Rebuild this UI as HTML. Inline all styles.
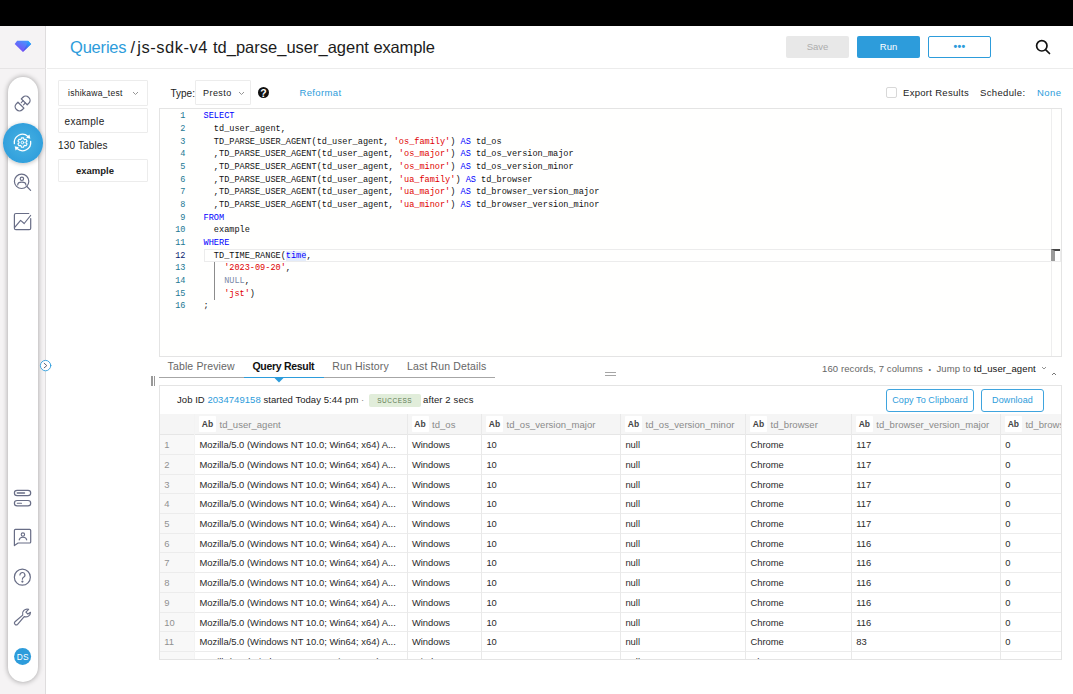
<!DOCTYPE html>
<html lang="en">
<head>
<meta charset="utf-8">
<title>Queries / js-sdk-v4 td_parse_user_agent example</title>
<style>
*{box-sizing:border-box;margin:0;padding:0}
html,body{width:1073px;height:694px;overflow:hidden;background:#fff;font-family:"Liberation Sans",sans-serif;color:#222;}
body{position:relative}
.abs{position:absolute}
#topbar{position:absolute;left:0;top:0;width:1073px;height:26px;background:#000}
#side{position:absolute;left:0;top:26px;width:46px;height:668px;background:#f5f3f4;border-right:1px solid #dfddde}
#sidelogo{position:absolute;left:0;top:26px;width:46px;height:43px;border-bottom:1px solid #e6e4e5}
#pill{position:absolute;left:7.7px;top:77px;width:29.9px;height:604.7px;border-radius:15px;background:#fff;box-shadow:0 0 5px 0.5px rgba(0,0,0,.3)}
#active{position:absolute;left:2.9px;top:122.9px;width:39.7px;height:39.7px;border-radius:50%;background:radial-gradient(circle at 50% 50%,#48b2e2 0%,#2d9cdb 85%);box-shadow:0 1px 4px rgba(0,0,0,.25)}
#header{position:absolute;left:47px;top:26px;width:1026px;height:43px;border-bottom:1px solid #ececec;background:#fff}
.title{position:absolute;top:37px;font-size:16.5px;line-height:20px;white-space:nowrap;color:#1c1c1c}
.btn{position:absolute;top:36px;height:22px;width:63px;border-radius:2px;font-size:9.5px;line-height:22px;text-align:center}
.box{position:absolute;background:#fff;border:1px solid #ececec;border-radius:1px}
.t{font-size:9.5px;line-height:12px;white-space:nowrap;position:absolute;color:#222}
.blue{color:#2d9cdb}
#editor{position:absolute;left:159px;top:108px;width:903px;height:249px;background:#fffffe;border:1px solid #e4e4e4;overflow:hidden}
.row{position:absolute;left:0;width:901px;height:12.67px;font-family:"Liberation Mono",monospace;font-size:8.57px;line-height:12.67px}
.ln{position:absolute;left:0;width:25.5px;text-align:right;color:#237893}
.ln.cur{color:#0b216f}
.code{position:absolute;left:43.6px;white-space:pre;color:#111}
.k{color:#0000ff}.s{color:#e00000}.n{color:#7b8aa8}
.hl{background:#e4ecfb}
#results{position:absolute;left:159px;top:385px;width:903px;height:275px;border:1px solid #e4e4e4;background:#fff;overflow:hidden}
.thbg{position:absolute;left:0;width:901px;background:#f5f5f5;border-bottom:1px solid #e6e6e6}
.rnbg{position:absolute;left:0;height:300px;background:#f8f8f8}
.ab{position:absolute;background:#fff;color:#444;font-weight:bold;font-size:8.5px;width:17px;height:16px;line-height:17.4px;text-align:center;border-radius:1px}
.cn{position:absolute;font-size:9.5px;line-height:21.6px;color:#8a8a8a;white-space:nowrap;letter-spacing:0.04px}
.tr{position:absolute;left:0;width:901px;height:19.72px;border-bottom:1px solid #ececec;font-size:9.42px;line-height:20.8px;color:#2a2a2a;white-space:nowrap}
.tr span{position:absolute;top:0}
.rn{left:4.2px;color:#919191}
.vl{position:absolute;width:1px;height:300px;background:#e9e9e9}
.tab{position:absolute;top:358.6px;font-size:10.5px;line-height:14px;color:#666;white-space:nowrap;letter-spacing:0.15px}
</style>
</head>
<body>
<div id="topbar"></div>
<div id="side"></div>
<div id="sidelogo"></div>
<div id="pill"></div>
<div id="active"></div>
<div id="header"></div>

<!-- sidebar icons -->
<svg class="abs" style="left:0;top:26px" width="60" height="668" viewBox="0 26 60 668" fill="none" stroke="#686d86" stroke-width="1.2" stroke-linecap="round" stroke-linejoin="round">
 <defs>
  <linearGradient id="gem" x1="1" y1="0" x2="0.2" y2="1"><stop offset="0" stop-color="#3aa5ff"/><stop offset="1" stop-color="#8144f6"/></linearGradient>
  <linearGradient id="gem2" x1="0.8" y1="0" x2="0.2" y2="1"><stop offset="0" stop-color="#1fb0ff"/><stop offset="1" stop-color="#5a3fe6"/></linearGradient>
 </defs>
 <path d="M17.1 40.7 H28 L31.2 44.1 L22.9 52 L14.7 44.1 Z" fill="url(#gem)" stroke="none"/>
 <path d="M28 40.7 L31.2 44.1 L22.9 52 L27.2 43.4 Z" fill="url(#gem2)" stroke="none"/>
 <!-- link -->
 <g transform="translate(22.6 103.5) rotate(-45)" stroke-width="1.3">
  <path d="M2.35 -4.2 H4.7 A3.9 3.9 0 0 1 8.6 -0.3 V0.3 A3.9 3.9 0 0 1 4.7 4.2 H2.35 Z"/>
  <path d="M-2.35 -4.2 H-4.7 A3.9 3.9 0 0 0 -8.6 -0.3 V0.3 A3.9 3.9 0 0 0 -4.7 4.2 H-2.35 Z"/>
  <path d="M-0.3 -1.6 H2.35 M-0.3 1.6 H2.35" stroke-width="1.1"/>
 </g>
 <!-- active gear -->
 <g stroke="#fff" stroke-width="1.3">
<path d="M21.00 139.34 L21.51 137.80 L23.49 137.80 L24.00 139.34 L24.49 139.62 L26.07 139.29 L27.06 141.01 L25.99 142.21 L25.99 142.79 L27.06 143.99 L26.07 145.71 L24.49 145.38 L24.00 145.66 L23.49 147.20 L21.51 147.20 L21.00 145.66 L20.51 145.38 L18.93 145.71 L17.94 143.99 L19.01 142.79 L19.01 142.21 L17.94 141.01 L18.93 139.29 L20.51 139.62 Z" stroke-width="1.15"/>
<circle cx="22.5" cy="142.5" r="1.3" stroke-width="0.9"/>
<path d="M14.38 143.64 A8.2 8.2 0 0 1 27.99 136.41"/>
<path d="M30.62 141.36 A8.2 8.2 0 0 1 17.01 148.59"/>
<path d="M30.33 138.80 L29.41 134.54 L26.11 137.73 Z" fill="#fff" stroke="none"/>
<path d="M14.67 146.20 L15.59 150.46 L18.89 147.27 Z" fill="#fff" stroke="none"/>

 </g>
 <!-- person search -->
 <g>
  <circle cx="21.6" cy="181.3" r="7.2"/>
  <circle cx="21.9" cy="178.8" r="1.7"/>
  <path d="M17.7 184.9 a4.1 2.8 0 0 1 8.2 0"/>
  <path d="M26.9 186.500 L30.600 190.300"/>
 </g>
 <!-- chart -->
 <g>
  <path d="M28.8 213.500 H15.900 a1.500 1.500 0 0 0 -1.500 1.500 V228.200 a1.500 1.500 0 0 0 1.500 1.500 H29.200 a1.500 1.500 0 0 0 1.500 -1.500 V218.500"/>
  <path d="M14.700 227.300 L20.600 220.400 L24.200 223.500 L30.600 215.500"/>
 </g>
 <!-- collapse circle -->
 <circle cx="45.6" cy="365.6" r="5.2" fill="#fff" stroke="#2d9cdb" stroke-width="0.9"/>
 <path d="M44.200 363.300 L46.800 365.600 L44.200 367.800" stroke="#4a5068" stroke-width="0.9"/>
 <!-- pills -->
 <rect x="14.400" y="490.300" width="16.300" height="5.400" rx="2.700"/>
 <rect x="14.400" y="500.500" width="16.300" height="5.400" rx="2.700"/>
 <path d="M17.300 493 H24.500" stroke-width="1.400"/><path d="M17.300 503.200 H21.500" stroke-width="1.100"/>
 <!-- contact -->
 <path d="M15.400 529.400 H29.700 a1 1 0 0 1 1 1 V542 a1 1 0 0 1 -1 1 H18.100 L14.400 545.600 V530.400 a1 1 0 0 1 1 -1 Z"/>
 <circle cx="22.900" cy="534.600" r="1.700" stroke-width="1.100"/>
 <path d="M19.200 539.900 a3.800 3.200 0 0 1 7.500 0" stroke-width="1.100"/>
 <!-- help -->
 <circle cx="22.350" cy="577.200" r="8"/>
 <path d="M19.900 575 a2.500 2.500 0 1 1 3.700 2.200 c-.9 .5 -1.200 1 -1.200 2"/>
 <circle cx="22.400" cy="581.600" r=".5" fill="#5a5f78"/>
 <!-- wrench -->
 <path d="M30.500 612.300 a4.600 4.600 0 0 1 -6.300 4.300 L17.600 624.300 a1.800 1.800 0 0 1 -2.600 -2.600 L22.700 615.100 a4.600 4.600 0 0 1 5.900 -5.700 L25.900 612.100 L27.900 614.100 Z"/>
 <!-- avatar -->
 <circle cx="22.600" cy="656.400" r="8.500" fill="#2d9cdb" stroke="none"/>
</svg>
<div class="abs" style="left:14.2px;top:650.8px;width:17px;text-align:center;font-size:8.4px;line-height:12px;color:#fff;letter-spacing:0">DS</div>

<div class="abs" style="left:0;top:0;width:0;height:0"><span class="title blue" style="left:70px;letter-spacing:-0.2px">Queries</span> <span class="title" style="left:130.500px">/</span> <span class="title" style="left:137.200px;letter-spacing:0.54px">js-sdk-v4</span> <span class="title" style="left:213px">td_parse_user_agent</span> <span class="title" style="left:373.400px;letter-spacing:-0.15px">example</span></div>
<div class="btn" style="left:786px;background:#e8e8e8;color:#adadad">Save</div>
<div class="btn" style="left:857px;background:#2d9cdb;color:#fff">Run</div>
<div class="btn" style="left:928px;background:#fff;border:1px solid #2d9cdb;color:#2d9cdb;line-height:18px;font-size:10.5px;font-weight:bold;letter-spacing:0.3px">•••</div>
<svg class="abs" style="left:1034px;top:38px" width="18" height="18" viewBox="0 0 18 18" fill="none" stroke="#111" stroke-width="1.7" stroke-linecap="round"><circle cx="7.800" cy="7.800" r="5.200"/><path d="M11.800 11.800 L15.500 15.500"/></svg>

<!-- left panel -->
<div class="box" style="left:58px;top:80px;width:90px;height:26px"></div>
<div class="t" style="left:68px;top:87px;font-size:8.5px;letter-spacing:0.27px">ishikawa_test</div>
<svg class="abs" style="left:132.3px;top:91px" width="7" height="5" viewBox="0 0 7 5" fill="none" stroke="#8a8a8a" stroke-width="0.9"><path d="M1 1 L3.500 3.500 L6 1"/></svg>
<div class="box" style="left:58px;top:108px;width:90px;height:25px"></div>
<div class="t" style="left:64.6px;top:115.8px;font-size:10px;letter-spacing:0.3px">example</div>
<div class="t" style="left:58px;top:139.8px;font-size:10px;letter-spacing:0.15px">130 Tables</div>
<div class="box" style="left:58px;top:159px;width:90px;height:23px"></div>
<div class="t" style="left:58px;top:165px;width:74px;text-align:center;font-size:9.5px;font-weight:bold">example</div>

<!-- toolbar -->
<div class="t" style="left:170.500px;top:87.5px;font-size:10px">Type:</div>
<div class="box" style="left:195px;top:80px;width:56px;height:25px"></div>
<div class="t" style="left:203px;top:87px;font-size:9px;letter-spacing:0.45px">Presto</div>
<svg class="abs" style="left:238px;top:91px" width="7" height="5" viewBox="0 0 7 5" fill="none" stroke="#8a8a8a" stroke-width="0.9"><path d="M1 1 L3.500 3.500 L6 1"/></svg>
<div class="abs" style="left:257.7px;top:86.7px;width:11.6px;height:11.6px;border-radius:50%;background:#111;color:#fff;font-size:10.5px;line-height:12px;font-weight:bold;text-align:center">?</div>
<div class="t blue" style="left:299.500px;top:87px;font-size:9.5px;letter-spacing:0.35px">Reformat</div>
<div class="abs" style="left:886px;top:87px;width:11px;height:11px;border:1px solid #d8d8d8;border-radius:2px;background:#fff"></div>
<div class="t" style="left:903px;top:87px;font-size:9.5px;letter-spacing:0.3px">Export Results</div>
<div class="t" style="left:980px;top:87px;font-size:9.5px;letter-spacing:0.35px">Schedule:</div>
<div class="t blue" style="left:1037px;top:87px;font-size:9.5px;letter-spacing:0.4px">None</div>

<!-- editor -->
<div id="editor">
<div class="abs" style="left:44px;top:140px;width:857px;height:13px;border:1px solid #ececec"></div>
<div class="abs" style="left:53.600px;top:152.500px;width:1px;height:38.500px;background:#8c8c8c"></div>
<div class="row" style="top:1.20px"><span class="ln">1</span><span class="code"><span class="k">SELECT</span></span></div>
<div class="row" style="top:13.87px"><span class="ln">2</span><span class="code">  td_user_agent,</span></div>
<div class="row" style="top:26.54px"><span class="ln">3</span><span class="code">  TD_PARSE_USER_AGENT(td_user_agent, <span class="s">&#x27;os_family&#x27;</span>) <span class="k">AS</span> td_os</span></div>
<div class="row" style="top:39.21px"><span class="ln">4</span><span class="code">  ,TD_PARSE_USER_AGENT(td_user_agent, <span class="s">&#x27;os_major&#x27;</span>) <span class="k">AS</span> td_os_version_major</span></div>
<div class="row" style="top:51.88px"><span class="ln">5</span><span class="code">  ,TD_PARSE_USER_AGENT(td_user_agent, <span class="s">&#x27;os_minor&#x27;</span>) <span class="k">AS</span> td_os_version_minor</span></div>
<div class="row" style="top:64.55px"><span class="ln">6</span><span class="code">  ,TD_PARSE_USER_AGENT(td_user_agent, <span class="s">&#x27;ua_family&#x27;</span>) <span class="k">AS</span> td_browser</span></div>
<div class="row" style="top:77.22px"><span class="ln">7</span><span class="code">  ,TD_PARSE_USER_AGENT(td_user_agent, <span class="s">&#x27;ua_major&#x27;</span>) <span class="k">AS</span> td_browser_version_major</span></div>
<div class="row" style="top:89.89px"><span class="ln">8</span><span class="code">  ,TD_PARSE_USER_AGENT(td_user_agent, <span class="s">&#x27;ua_minor&#x27;</span>) <span class="k">AS</span> td_browser_version_minor</span></div>
<div class="row" style="top:102.56px"><span class="ln">9</span><span class="code"><span class="k">FROM</span></span></div>
<div class="row" style="top:115.23px"><span class="ln">10</span><span class="code">  example</span></div>
<div class="row" style="top:127.90px"><span class="ln">11</span><span class="code"><span class="k">WHERE</span></span></div>
<div class="row" style="top:140.57px"><span class="ln cur">12</span><span class="code">  TD_TIME_RANGE(<span class="k hl">time</span>,</span></div>
<div class="row" style="top:153.24px"><span class="ln">13</span><span class="code">    <span class="s">&#x27;2023-09-20&#x27;</span>,</span></div>
<div class="row" style="top:165.91px"><span class="ln">14</span><span class="code">    <span class="n">NULL</span>,</span></div>
<div class="row" style="top:178.58px"><span class="ln">15</span><span class="code">    <span class="s">&#x27;jst&#x27;</span>)</span></div>
<div class="row" style="top:191.25px"><span class="ln">16</span><span class="code">;</span></div>
<div class="abs" style="left:891px;top:0;width:1px;height:247px;background:#eeeeee"></div>
<div class="abs" style="left:891px;top:140px;width:9px;height:12px;background:#fff;border-top:2px solid #444;border-left:4px solid #9a9a9a"></div>
</div>

<!-- tabs -->
<div class="abs" style="left:151.4px;top:375.5px;width:1.2px;height:10.8px;background:#999"></div>
<div class="abs" style="left:154.3px;top:375.5px;width:1.2px;height:10.8px;background:#999"></div>
<div class="tab" style="left:167.500px">Table Preview</div>
<div class="tab" style="left:252.500px;color:#111;font-weight:bold;letter-spacing:-0.3px">Query Result</div>
<div class="tab" style="left:332.300px">Run History</div>
<div class="tab" style="left:407px">Last Run Details</div>
<div class="abs" style="left:159px;top:377px;width:336px;height:1px;background:#a6a6a6"></div>
<div class="abs" style="left:244px;top:376.500px;width:80px;height:1.500px;background:#2d9cdb"></div>
<svg class="abs" style="left:274px;top:378px" width="10" height="5" viewBox="0 0 10 5"><path d="M0.500 0 H9.500 L5 4.500 Z" fill="#2d9cdb"/></svg>
<div class="abs" style="left:605px;top:372px;width:11px;height:1px;background:#a5a5a5"></div>
<div class="abs" style="left:605px;top:375px;width:11px;height:1px;background:#a5a5a5"></div>
<div class="t" style="left:822px;top:363.2px;font-size:9.5px;letter-spacing:0.1px;color:#666">160 records, 7 columns &nbsp;<span style="font-size:7px">•</span>&nbsp; Jump to <span style="color:#111">td_user_agent</span></div>
<svg class="abs" style="left:1041.200px;top:366.300px" width="6" height="4" viewBox="0 0 6 4" fill="none" stroke="#777" stroke-width="0.8"><path d="M1 1 L3 3 L5 1"/></svg>
<svg class="abs" style="left:1050.800px;top:371.500px" width="6" height="4" viewBox="0 0 6 4" fill="none" stroke="#555" stroke-width="0.8"><path d="M1 3 L3 1 L5 3"/></svg>

<!-- results -->
<div id="results">
<div class="t" style="left:17px;top:7.700px;font-size:9.5px;letter-spacing:0.05px">Job ID <span class="blue">2034749158</span> started Today 5:44 pm <span style="color:#888">·</span></div>
<div class="abs" style="left:209px;top:7.500px;width:51.500px;height:13.500px;background:#e1edda;border-radius:2px;color:#5d7a52;font-size:6.500px;line-height:13.500px;text-align:center;letter-spacing:0.5px">SUCCESS</div>
<div class="t" style="left:263px;top:7.700px;font-size:9.5px;letter-spacing:0.12px">after 2 secs</div>
<div class="abs" style="left:726px;top:3px;width:88px;height:22.5px;border:1px solid #3fa4de;border-radius:3px;color:#2d9cdb;font-size:9px;line-height:21px;text-align:center;letter-spacing:0.1px">Copy To Clipboard</div>
<div class="abs" style="left:821px;top:3px;width:63px;height:22.5px;border:1px solid #3fa4de;border-radius:3px;color:#2d9cdb;font-size:9px;line-height:21px;text-align:center;letter-spacing:0.1px">Download</div>
<div class="thbg" style="top:28.00px;height:20.60px"></div>
<div class="rnbg" style="top:48.60px;width:34.5px"></div>
<div class="ab" style="left:39.0px;top:30.3px">Ab</div><div class="cn" style="left:59.5px;top:28.00px">td_user_agent</div>
<div class="ab" style="left:251.5px;top:30.3px">Ab</div><div class="cn" style="left:272.0px;top:28.00px">td_os</div>
<div class="ab" style="left:326.0px;top:30.3px">Ab</div><div class="cn" style="left:346.5px;top:28.00px">td_os_version_major</div>
<div class="ab" style="left:465.0px;top:30.3px">Ab</div><div class="cn" style="left:485.5px;top:28.00px">td_os_version_minor</div>
<div class="ab" style="left:590.0px;top:30.3px">Ab</div><div class="cn" style="left:610.5px;top:28.00px">td_browser</div>
<div class="ab" style="left:695.8px;top:30.3px">Ab</div><div class="cn" style="left:716.3px;top:28.00px">td_browser_version_major</div>
<div class="ab" style="left:844.9px;top:30.3px">Ab</div><div class="cn" style="left:865.4px;top:28.00px">td_browser_version_minor</div>
<div class="tr" style="top:49.10px"><span class="rn">1</span><span class="td" style="left:39.4px">Mozilla/5.0 (Windows NT 10.0; Win64; x64) A...</span><span class="td" style="left:251.9px">Windows</span><span class="td" style="left:326.4px">10</span><span class="td" style="left:465.4px">null</span><span class="td" style="left:590.4px">Chrome</span><span class="td" style="left:696.2px">117</span><span class="td" style="left:845.3px">0</span></div>
<div class="tr" style="top:68.82px"><span class="rn">2</span><span class="td" style="left:39.4px">Mozilla/5.0 (Windows NT 10.0; Win64; x64) A...</span><span class="td" style="left:251.9px">Windows</span><span class="td" style="left:326.4px">10</span><span class="td" style="left:465.4px">null</span><span class="td" style="left:590.4px">Chrome</span><span class="td" style="left:696.2px">117</span><span class="td" style="left:845.3px">0</span></div>
<div class="tr" style="top:88.54px"><span class="rn">3</span><span class="td" style="left:39.4px">Mozilla/5.0 (Windows NT 10.0; Win64; x64) A...</span><span class="td" style="left:251.9px">Windows</span><span class="td" style="left:326.4px">10</span><span class="td" style="left:465.4px">null</span><span class="td" style="left:590.4px">Chrome</span><span class="td" style="left:696.2px">117</span><span class="td" style="left:845.3px">0</span></div>
<div class="tr" style="top:108.26px"><span class="rn">4</span><span class="td" style="left:39.4px">Mozilla/5.0 (Windows NT 10.0; Win64; x64) A...</span><span class="td" style="left:251.9px">Windows</span><span class="td" style="left:326.4px">10</span><span class="td" style="left:465.4px">null</span><span class="td" style="left:590.4px">Chrome</span><span class="td" style="left:696.2px">117</span><span class="td" style="left:845.3px">0</span></div>
<div class="tr" style="top:127.98px"><span class="rn">5</span><span class="td" style="left:39.4px">Mozilla/5.0 (Windows NT 10.0; Win64; x64) A...</span><span class="td" style="left:251.9px">Windows</span><span class="td" style="left:326.4px">10</span><span class="td" style="left:465.4px">null</span><span class="td" style="left:590.4px">Chrome</span><span class="td" style="left:696.2px">117</span><span class="td" style="left:845.3px">0</span></div>
<div class="tr" style="top:147.70px"><span class="rn">6</span><span class="td" style="left:39.4px">Mozilla/5.0 (Windows NT 10.0; Win64; x64) A...</span><span class="td" style="left:251.9px">Windows</span><span class="td" style="left:326.4px">10</span><span class="td" style="left:465.4px">null</span><span class="td" style="left:590.4px">Chrome</span><span class="td" style="left:696.2px">116</span><span class="td" style="left:845.3px">0</span></div>
<div class="tr" style="top:167.42px"><span class="rn">7</span><span class="td" style="left:39.4px">Mozilla/5.0 (Windows NT 10.0; Win64; x64) A...</span><span class="td" style="left:251.9px">Windows</span><span class="td" style="left:326.4px">10</span><span class="td" style="left:465.4px">null</span><span class="td" style="left:590.4px">Chrome</span><span class="td" style="left:696.2px">116</span><span class="td" style="left:845.3px">0</span></div>
<div class="tr" style="top:187.14px"><span class="rn">8</span><span class="td" style="left:39.4px">Mozilla/5.0 (Windows NT 10.0; Win64; x64) A...</span><span class="td" style="left:251.9px">Windows</span><span class="td" style="left:326.4px">10</span><span class="td" style="left:465.4px">null</span><span class="td" style="left:590.4px">Chrome</span><span class="td" style="left:696.2px">116</span><span class="td" style="left:845.3px">0</span></div>
<div class="tr" style="top:206.86px"><span class="rn">9</span><span class="td" style="left:39.4px">Mozilla/5.0 (Windows NT 10.0; Win64; x64) A...</span><span class="td" style="left:251.9px">Windows</span><span class="td" style="left:326.4px">10</span><span class="td" style="left:465.4px">null</span><span class="td" style="left:590.4px">Chrome</span><span class="td" style="left:696.2px">116</span><span class="td" style="left:845.3px">0</span></div>
<div class="tr" style="top:226.58px"><span class="rn">10</span><span class="td" style="left:39.4px">Mozilla/5.0 (Windows NT 10.0; Win64; x64) A...</span><span class="td" style="left:251.9px">Windows</span><span class="td" style="left:326.4px">10</span><span class="td" style="left:465.4px">null</span><span class="td" style="left:590.4px">Chrome</span><span class="td" style="left:696.2px">116</span><span class="td" style="left:845.3px">0</span></div>
<div class="tr" style="top:246.30px"><span class="rn">11</span><span class="td" style="left:39.4px">Mozilla/5.0 (Windows NT 10.0; Win64; x64) A...</span><span class="td" style="left:251.9px">Windows</span><span class="td" style="left:326.4px">10</span><span class="td" style="left:465.4px">null</span><span class="td" style="left:590.4px">Chrome</span><span class="td" style="left:696.2px">83</span><span class="td" style="left:845.3px">0</span></div>
<div class="tr" style="top:266.02px"><span class="rn">12</span><span class="td" style="left:39.4px">Mozilla/5.0 (Windows NT 10.0; Win64; x64) A...</span><span class="td" style="left:251.9px">Windows</span><span class="td" style="left:326.4px">10</span><span class="td" style="left:465.4px">null</span><span class="td" style="left:590.4px">Chrome</span><span class="td" style="left:696.2px">83</span><span class="td" style="left:845.3px">0</span></div>
<div class="vl" style="left:34.0px;top:28.00px;background:#f3f3f3"></div>
<div class="vl" style="left:246.5px;top:28.00px"></div>
<div class="vl" style="left:321.0px;top:28.00px"></div>
<div class="vl" style="left:460.0px;top:28.00px"></div>
<div class="vl" style="left:585.0px;top:28.00px"></div>
<div class="vl" style="left:690.8px;top:28.00px"></div>
<div class="vl" style="left:839.9px;top:28.00px"></div>
</div>
</body>
</html>
